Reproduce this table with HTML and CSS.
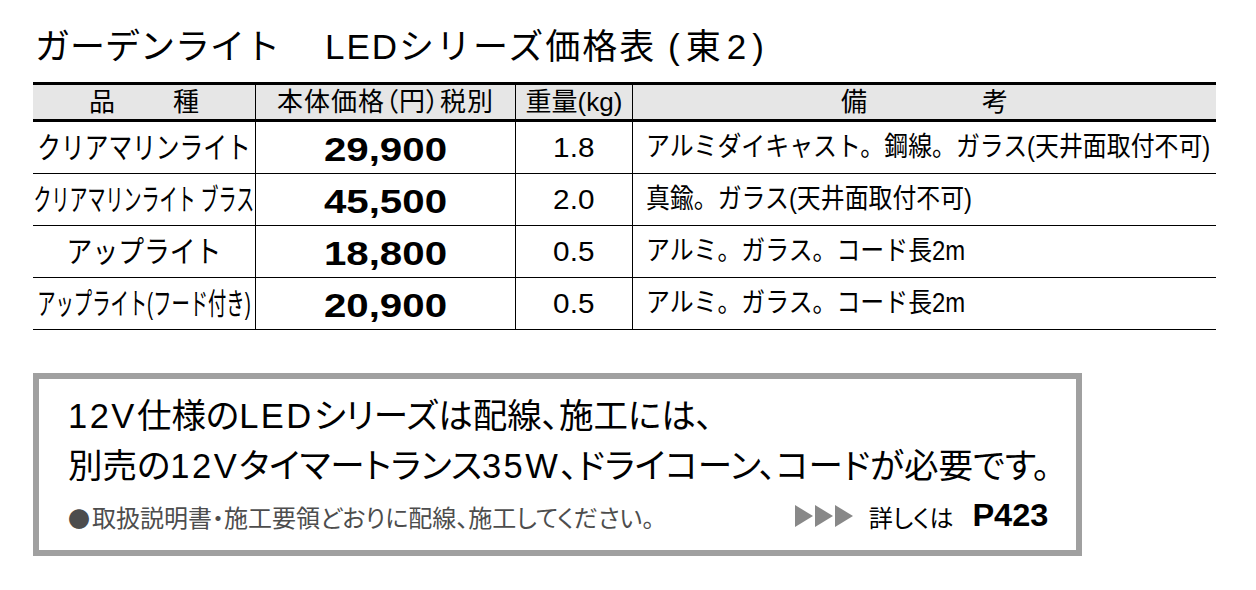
FILE: index.html
```html
<!DOCTYPE html>
<html lang="ja">
<head>
<meta charset="utf-8">
<title>ガーデンライト LEDシリーズ価格表</title>
<link rel="stylesheet" href="styles.css">
</head>
<body>
<div class="page">
  <h1 class="title">ガーデンライト　<span class="t-rest">LEDシリーズ価格表 <span class="t-east">(東2)</span></span></h1>

  <div class="table">
    <div class="row head">
      <div class="cell spread spread-name"><span>品</span><span>種</span></div>
      <div class="cell"><span class="hd-price">本体価格（円）税別</span></div>
      <div class="cell">重量(kg)</div>
      <div class="cell spread spread-note"><span>備</span><span>考</span></div>
    </div>

    <div class="row">
      <div class="cell name"><span class="sq sq-a">クリアマリンライト</span></div>
      <div class="cell price"><span>29,900</span></div>
      <div class="cell weight"><span>1.8</span></div>
      <div class="cell remark"><span>アルミダイキャスト。鋼線。ガラス(天井面取付不可)</span></div>
    </div>
    <div class="row">
      <div class="cell name"><span class="sq sq-b">クリアマリンライト ブラス</span></div>
      <div class="cell price"><span>45,500</span></div>
      <div class="cell weight"><span>2.0</span></div>
      <div class="cell remark"><span>真鍮。ガラス(天井面取付不可)</span></div>
    </div>
    <div class="row">
      <div class="cell name"><span class="sq sq-c">アップライト</span></div>
      <div class="cell price"><span>18,800</span></div>
      <div class="cell weight"><span>0.5</span></div>
      <div class="cell remark"><span>アルミ。ガラス。コード長2m</span></div>
    </div>
    <div class="row">
      <div class="cell name"><span class="sq sq-d">アップライト(フード付き)</span></div>
      <div class="cell price"><span>20,900</span></div>
      <div class="cell weight"><span>0.5</span></div>
      <div class="cell remark"><span>アルミ。ガラス。コード長2m</span></div>
    </div>
  </div>

  <div class="note">
    <p class="lead"><span class="lat">12V</span>仕様の<span class="lat">LED</span>シリーズは配線、施工には、</p>
    <p class="lead">別売の<span class="lat">12V</span>タイマートランス<span class="lat">35W</span>、ドライコーン、コードが必要です。</p>
    <div class="foot">
      <span class="small"><span class="dot">●</span>取扱説明書・施工要領どおりに配線、施工してください。</span>
      <span class="more">
        <svg class="arrows" width="58" height="22" viewBox="0 0 58 22" aria-hidden="true">
          <polygon points="0,0 18,11 0,22" />
          <polygon points="20,0 38,11 20,22" />
          <polygon points="40,0 58,11 40,22" />
        </svg>
        <span class="more-text">詳しくは</span>
        <span class="page-no">P423</span>
      </span>
    </div>
  </div>
</div>
</body>
</html>
```

FILE: styles.css
```css
* { box-sizing: border-box; }

body {
  margin: 0;
  background: #fff;
  color: #000;
  font-family: "Liberation Sans", "Noto Sans CJK JP", sans-serif;
}

.page {
  padding: 27px 0 0 33px;
}

.title {
  margin: 0 0 15px 2px;
  font-size: 35px;
  font-weight: 400;
  line-height: 40px;
  white-space: nowrap;
}

.t-rest {
  letter-spacing: 2px;
  margin-left: 10px;
}

.t-east {
  letter-spacing: 6px;
}

.table {
  width: 1183px;
}

.row {
  display: grid;
  grid-template-columns: 222px 260px 117px 584px;
  height: 52px;
  border-bottom: 1px solid #000;
}

.cell {
  display: flex;
  align-items: center;
  justify-content: center;
  white-space: nowrap;
  min-width: 0;
}

.cell + .cell {
  border-left: 1px solid #000;
}

.head {
  height: 40px;
  background: #e6e6e6;
  border-top: 3px solid #000;
  border-bottom: 3px solid #000;
  font-size: 26px;
  line-height: 34px;
}

.spread-name { gap: 58px; }
.spread-note { gap: 115px; }

.hd-price {
  font-feature-settings: "palt";
  letter-spacing: 1px;
}

.name span {
  font-size: 30px;
  line-height: 1;
  transform-origin: center;
}
.sq-a { transform: scaleX(0.79); }
.sq-b { transform: scaleX(0.6); }
.sq-c { transform: scaleX(0.86); }
.sq-d { transform: scaleX(0.61); }

.price span {
  font-size: 33px;
  font-weight: 700;
  line-height: 1;
  transform: scaleX(1.22);
  margin-top: 4px;
}

.weight span {
  font-size: 27px;
  line-height: 1;
  transform: scaleX(1.1);
  margin-top: 2px;
}

.remark {
  justify-content: flex-start;
  padding-left: 13px;
}
.remark span {
  font-size: 27px;
  line-height: 1;
  transform: scaleX(0.885);
  transform-origin: left center;
}

.note {
  width: 1049px;
  height: 183px;
  margin-top: 43px;
  border: 6px solid #a0a0a0;
  padding: 12px 28px 0 29px;
}

.lead {
  margin: 0;
  font-size: 34.5px;
  line-height: 50px;
  white-space: nowrap;
  font-feature-settings: "palt";
}

.lat {
  letter-spacing: 2.5px;
}

.foot {
  display: flex;
  align-items: center;
  justify-content: space-between;
  height: 50px;
}

.small {
  font-size: 24px;
  color: #4d4d4d;
  font-feature-settings: "palt";
  white-space: nowrap;
}

.dot {
  font-family: "Noto Sans CJK JP", sans-serif;
  font-size: 22px;
  margin-right: 2px;
}

.more {
  display: flex;
  align-items: center;
}

.arrows {
  fill: #888;
  margin-right: 16px;
}

.more-text {
  font-size: 24px;
  font-feature-settings: "palt";
  margin-right: 22px;
}

.page-no {
  font-size: 31px;
  font-weight: 700;
  transform: scaleX(1.05);
  transform-origin: right center;
}
```
